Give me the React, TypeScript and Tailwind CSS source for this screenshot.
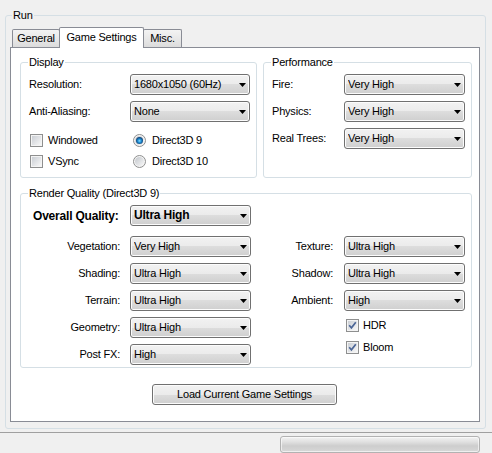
import { useId, type ReactNode } from 'react'

// ─── Small Win7-style controls ─────────────────────────────────────
function Combo({ value, bold, className = 'w-[121px]' }: { value: string; bold?: boolean; className?: string }) {
  return (
    <div
      className={`flex h-[21px] shrink-0 items-center rounded-[3px] border border-[#707070] bg-[linear-gradient(to_bottom,#f2f2f2_0%,#ebebeb_50%,#dddddd_50%,#cfcfcf_100%)] pl-[3px] pr-[3px] shadow-[inset_0_0_0_1px_#fcfcfc] ${className}`}
    >
      <span className={`flex-1 truncate leading-[13px] ${bold ? 'text-[12px] font-bold' : ''}`}>{value}</span>
      <svg width="7" height="4" viewBox="0 0 7 4" className="shrink-0">
        <polygon points="0,0 7,0 3.5,4" fill="#000" />
      </svg>
    </div>
  )
}

function CheckBox({ checked }: { checked?: boolean }) {
  return (
    <span className="flex h-[13px] w-[13px] shrink-0 border border-[#8e8f8f] bg-[#f4f4f4] p-[1px]">
      <span className="flex h-full w-full items-center justify-center bg-gradient-to-br from-[#cbcfd5] to-[#f7f7f7]">
        {checked && (
          <svg width="9" height="9" viewBox="0 0 9 9">
            <path d="M1.2 4.3 L3.4 6.8 L7.8 1.2" fill="none" stroke="#4b6596" strokeWidth="1.7" />
          </svg>
        )}
      </span>
    </span>
  )
}

function Radio({ checked }: { checked?: boolean }) {
  const id = useId()
  return (
    <svg width="13" height="13" viewBox="0 0 13 13" className="shrink-0">
      <defs>
        <linearGradient id={`${id}bg`} x1="0" y1="0" x2="1" y2="1">
          <stop offset="0" stopColor="#c3c7cc" />
          <stop offset="1" stopColor="#f8f8f8" />
        </linearGradient>
        <radialGradient id={`${id}dot`} cx="0.5" cy="0.55" r="0.55">
          <stop offset="0" stopColor="#8fe0ff" />
          <stop offset="0.45" stopColor="#1e8fd6" />
          <stop offset="1" stopColor="#0d3566" />
        </radialGradient>
      </defs>
      <circle cx="6.5" cy="6.5" r="6" fill="#f4f4f4" stroke="#8e8f8f" />
      <circle cx="6.5" cy="6.5" r="4.5" fill={`url(#${id}bg)`} />
      {checked && <circle cx="6.5" cy="6.5" r="3.5" fill={`url(#${id}dot)`} />}
    </svg>
  )
}

function GroupBox({
  title, className, legendClass = 'ml-[7px]', children,
}: { title: string; className: string; legendClass?: string; children: ReactNode }) {
  return (
    <fieldset className={`shrink-0 rounded-[3px] border border-[#d5dfe5] ${className}`}>
      <legend className={`px-[1px] leading-[15px] ${legendClass}`}>{title}</legend>
      {children}
    </fieldset>
  )
}

function Row({ label, value, labelClass }: { label: string; value: string; labelClass: string }) {
  return (
    <div className="flex h-[21px] items-center">
      <span className={`shrink-0 leading-[13px] ${labelClass}`}>{label}</span>
      <Combo value={value} />
    </div>
  )
}

// ─── Tabs ──────────────────────────────────────────────────────────
function TabStrip() {
  const idle =
    'flex h-[18px] items-center justify-center rounded-t-[2px] border border-b-0 border-[#898c95] bg-[linear-gradient(to_bottom,#f3f3f3,#e8e8e8_50%,#dcdcdc)]'
  return (
    <div className="flex h-[24px] items-end pl-[2px]">
      <div className={`${idle} w-[48px]`}>General</div>
      <div className="relative z-10 -mb-px -ml-px flex h-[21px] w-[85px] items-center justify-center rounded-t-[2px] border border-b-0 border-[#898c95] bg-white pb-[2px]">
        Game Settings
      </div>
      <div className={`${idle} -ml-px w-[39px]`}>Misc.</div>
    </div>
  )
}

export default function App() {
  const leftRows = [
    ['Vegetation:', 'Very High'],
    ['Shading:', 'Ultra High'],
    ['Terrain:', 'Ultra High'],
    ['Geometry:', 'Ultra High'],
    ['Post FX:', 'High'],
  ]
  const rightRows = [
    ['Texture:', 'Ultra High'],
    ['Shadow:', 'Ultra High'],
    ['Ambient:', 'High'],
  ]

  return (
    <div className="h-[453px] w-[492px] overflow-hidden bg-[#f0f0f0] font-['Liberation_Sans',Arial,sans-serif] text-[11px] tracking-[-0.2px] text-black">
      <div className="pl-[5px] pt-[8px]">
        <GroupBox title="Run" className="h-[421px] w-[481px]" legendClass="ml-[6px]">
          <div className="pl-[4px]">
            <TabStrip />

            {/* Tab page */}
            <div className="h-[375px] w-[470px] border border-[#898c95] bg-white pl-[9px] pt-[7px]">
              <div className="flex gap-[6px]">
                {/* Display */}
                <GroupBox title="Display" className="h-[123px] w-[237px]">
                  <div className="flex flex-col pl-[8px] pt-[4px]">
                    <div className="flex h-[21px] items-center">
                      <span className="w-[101px] shrink-0 leading-[13px]">Resolution:</span>
                      <Combo value="1680x1050 (60Hz)" className="w-[120px]" />
                    </div>
                    <div className="mt-[6px] flex h-[21px] items-center">
                      <span className="w-[101px] shrink-0 leading-[13px]">Anti-Aliasing:</span>
                      <Combo value="None" className="w-[120px]" />
                    </div>
                    <div className="mt-[8px] flex h-[21px] items-center">
                      <div className="flex w-[104px] items-center gap-[5px] pl-[1px]">
                        <CheckBox />
                        <span className="leading-[13px]">Windowed</span>
                      </div>
                      <Radio checked />
                      <span className="ml-[6px] leading-[13px]">Direct3D 9</span>
                    </div>
                    <div className="flex h-[21px] items-center">
                      <div className="flex w-[104px] items-center gap-[5px] pl-[1px]">
                        <CheckBox />
                        <span className="leading-[13px]">VSync</span>
                      </div>
                      <Radio />
                      <span className="ml-[6px] leading-[13px]">Direct3D 10</span>
                    </div>
                  </div>
                </GroupBox>

                {/* Performance */}
                <GroupBox title="Performance" className="h-[123px] w-[209px]">
                  <div className="flex flex-col gap-[6px] pl-[8px] pt-[4px]">
                    <Row label="Fire:" value="Very High" labelClass="w-[72px]" />
                    <Row label="Physics:" value="Very High" labelClass="w-[72px]" />
                    <Row label="Real Trees:" value="Very High" labelClass="w-[72px]" />
                  </div>
                </GroupBox>
              </div>

              {/* Render Quality */}
              <GroupBox title="Render Quality (Direct3D 9)" className="mt-[8px] h-[182px] w-[452px]">
                <div className="pl-[12px] pt-[4px]">
                  <div className="flex h-[21px] items-center">
                    <span className="w-[97px] shrink-0 text-[12px] font-bold leading-[14px]">Overall Quality:</span>
                    <Combo value="Ultra High" bold />
                  </div>
                  <div className="mt-[10px] flex">
                    <div className="flex flex-col gap-[6px]">
                      {leftRows.map(([l, v]) => (
                        <Row key={l} label={l} value={v} labelClass="mr-[10px] w-[87px] text-right" />
                      ))}
                    </div>
                    <div className="ml-[10px] flex flex-col">
                      <div className="flex flex-col gap-[6px]">
                        {rightRows.map(([l, v]) => (
                          <Row key={l} label={l} value={v} labelClass="mr-[11px] w-[72px] text-right" />
                        ))}
                      </div>
                      <div className="mt-[6px] flex h-[17px] items-center gap-[4px] pl-[85px]">
                        <CheckBox checked />
                        <span className="leading-[13px]">HDR</span>
                      </div>
                      <div className="mt-[5px] flex h-[17px] items-center gap-[4px] pl-[85px]">
                        <CheckBox checked />
                        <span className="leading-[13px]">Bloom</span>
                      </div>
                    </div>
                  </div>
                </div>
              </GroupBox>

              <button className="ml-[132px] mt-[16px] flex h-[21px] w-[185px] items-center justify-center rounded-[3px] border border-[#707070] bg-[linear-gradient(to_bottom,#f2f2f2_0%,#ebebeb_50%,#dddddd_50%,#cfcfcf_100%)] shadow-[inset_0_0_0_1px_#fcfcfc]">
                Load Current Game Settings
              </button>
            </div>
          </div>
        </GroupBox>
      </div>

      {/* Status strip */}
      <div className="mt-[3px] flex h-[21px] justify-end border-t border-[#a0a0a0] pr-[12px] pt-[3px]">
        <div className="h-[17px] w-[200px] rounded-[3px] border border-[#b2b2b2] bg-[linear-gradient(to_bottom,#f3f3f3,#e2e2e2_30%,#cdcdcd_60%,#d8d8d8)] shadow-[inset_0_0_0_1px_rgba(255,255,255,0.6)]" />
      </div>
    </div>
  )
}
